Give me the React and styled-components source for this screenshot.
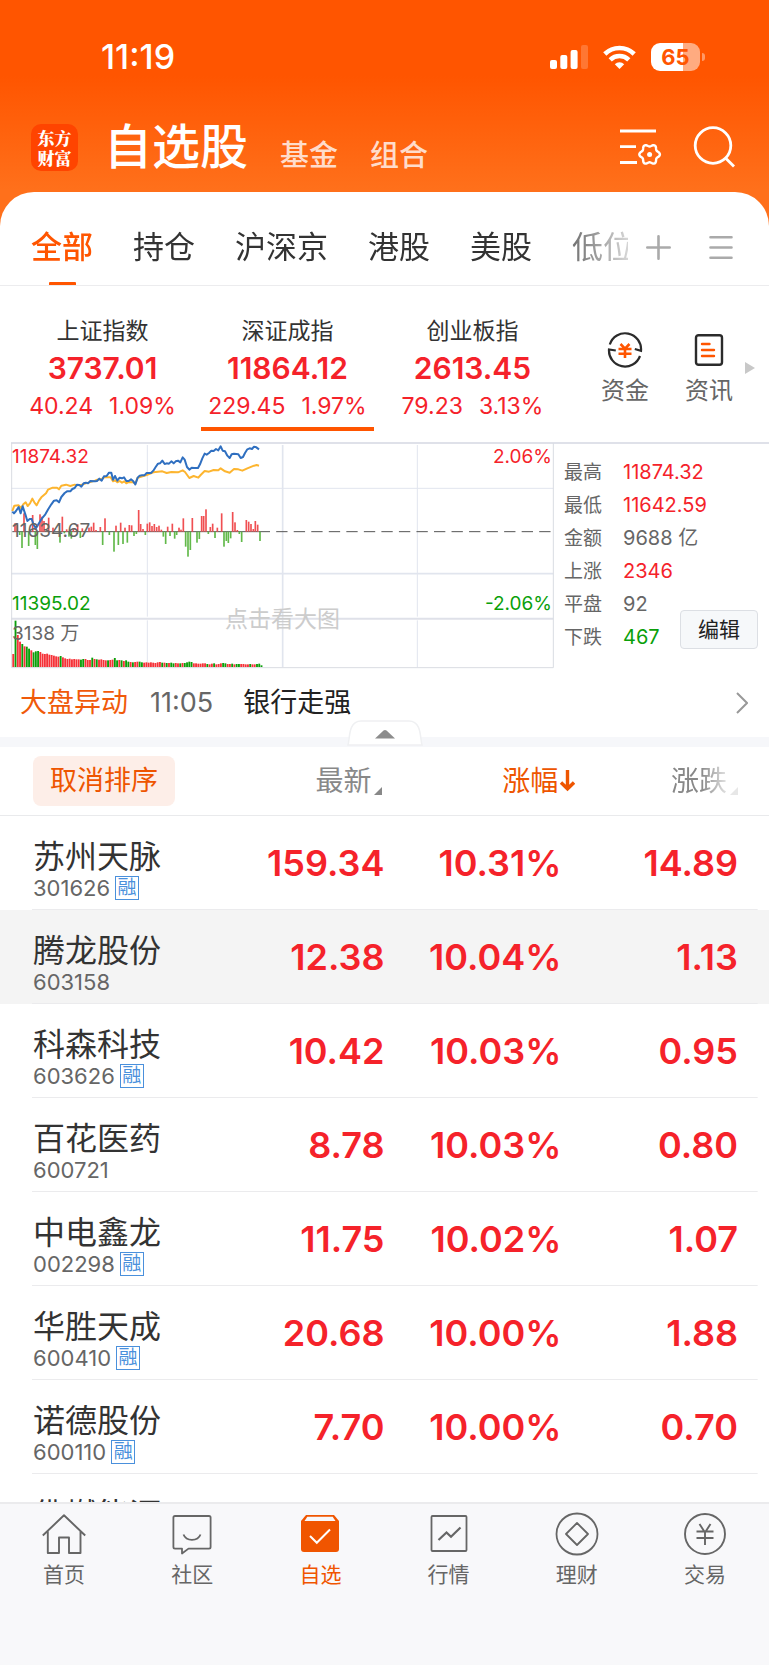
import React from 'react'
import styled, { createGlobalStyle, css } from 'styled-components'

const RED = '#f5222a'
const GREEN = '#0a9f0a'
const ORANGE = '#ff5500'

const GlobalStyle = createGlobalStyle`
  * { box-sizing: border-box; }
  body {
    margin: 0;
    font-family: Inter, "Noto Sans CJK SC", sans-serif;
    color: #333;
  }
  button {
    margin: 0;
    padding: 0;
    border: 0;
    background: none;
    font: inherit;
    color: inherit;
    cursor: pointer;
  }
  a { color: inherit; text-decoration: none; }
  svg { display: block; flex-shrink: 0; }
`

/* ---------- data ---------- */

const groups = ['全部', '持仓', '沪深京', '港股', '美股', '低位']

const indexes = [
  { name: '上证指数', value: '3737.01', change: '40.24', pct: '1.09%' },
  { name: '深证成指', value: '11864.12', change: '229.45', pct: '1.97%', active: true },
  { name: '创业板指', value: '2613.45', change: '79.23', pct: '3.13%' },
]

const summary = [
  { label: '最高', value: '11874.32', color: RED },
  { label: '最低', value: '11642.59', color: RED },
  { label: '金额', value: '9688 亿' },
  { label: '上涨', value: '2346', color: RED },
  { label: '平盘', value: '92' },
  { label: '下跌', value: '467', color: GREEN },
]

const stocks = [
  { name: '苏州天脉', code: '301626', margin: true, price: '159.34', pct: '10.31%', diff: '14.89' },
  { name: '腾龙股份', code: '603158', price: '12.38', pct: '10.04%', diff: '1.13', pressed: true },
  { name: '科森科技', code: '603626', margin: true, price: '10.42', pct: '10.03%', diff: '0.95' },
  { name: '百花医药', code: '600721', price: '8.78', pct: '10.03%', diff: '0.80' },
  { name: '中电鑫龙', code: '002298', margin: true, price: '11.75', pct: '10.02%', diff: '1.07' },
  { name: '华胜天成', code: '600410', margin: true, price: '20.68', pct: '10.00%', diff: '1.88' },
  { name: '诺德股份', code: '600110', margin: true, price: '7.70', pct: '10.00%', diff: '0.70' },
  { name: '佛燃能源' },
]

// [x, end of bar], the bars start on the zero line
const upBars = [
  [45, 265], [52, 268], [72, 235], [98, 240], [120, 238], [126, 245], [132, 258], [146, 248],
  [159, 278], [187, 245], [200, 283], [220, 280], [233, 268], [247, 280], [267, 278], [274, 275],
  [281, 263], [288, 285], [301, 276], [315, 250], [348, 272], [362, 263], [375, 278], [388, 270],
  [395, 271], [416, 225], [422, 267], [429, 282], [442, 266], [449, 262], [456, 273], [463, 267],
  [470, 276], [477, 272], [484, 284], [503, 275], [517, 266], [537, 278], [543, 284], [550, 250],
  [577, 249], [605, 243], [611, 243], [618, 223], [631, 276], [638, 266], [652, 278], [665, 235],
  [698, 231], [705, 262], [712, 285], [739, 255], [746, 260], [753, 267], [760, 282], [766, 258],
  [773, 269],
]
const downBars = [
  [59, 300], [66, 339], [86, 333], [106, 330], [112, 342], [180, 323], [193, 295], [207, 305],
  [214, 311], [241, 309], [308, 330], [328, 300], [342, 350], [355, 330], [369, 327], [382, 323],
  [402, 303], [409, 297], [436, 300], [490, 305], [497, 327], [510, 303], [524, 311], [530, 300],
  [557, 335], [564, 365], [571, 345], [591, 323], [598, 312], [625, 297], [645, 309], [672, 335],
  [679, 318], [685, 324], [692, 310], [718, 297], [725, 321], [780, 318],
]

const volumes = [
  39, 139, 96, 76, 69, 62, 61, 55, 50, 44, 47, 48, 45, 40, 39, 40, 37, 36, 34, 32, 31, 33,
  29, 26, 24, 25, 23, 24, 23, 23, 22, 24, 24, 21, 21, 28, 24, 23, 22, 23, 21, 20, 20, 21,
  22, 27, 20, 21, 20, 18, 20, 16, 15, 14, 15, 16, 16, 14, 13, 14, 13, 14, 13, 12, 14, 15,
  13, 13, 12, 12, 13, 11, 12, 11, 11, 12, 12, 14, 16, 15, 11, 11, 10, 10, 11, 11, 9, 8,
  10, 11, 8, 9, 11, 12, 11, 9, 9, 10, 8, 9, 9, 9, 9, 8, 8, 9, 8, 8, 9, 10, 5,
]
const volumeColors =
  'rgrrgrggrgggrrrrrrrrrgrrrrrrrrggrrrgrgrrrrgrrggrgrggrgrrggrrrrrrrrgrgrggrrgrggggrrrrrrgrrgrrrggrrgrggrrrrgrrggg'

const priceLine =
  '37,230 42,235 48,228 56,216 62,235 68,214 76,238 82,258 89,252 95,252 101,270 108,280 116,266 126,250 136,238 145,222 154,208 162,197 170,196 177,202 184,186 194,174 201,169 211,169 217,162 224,159 231,149 238,150 244,155 251,145 258,143 264,145 271,138 285,139 291,138 298,131 305,137 312,124 320,123 327,113 334,113 339,134 345,123 352,137 359,128 366,130 372,127 379,138 386,138 393,133 400,139 406,148 413,128 419,122 426,121 433,121 440,114 453,114 460,107 467,96 474,86 480,85 487,77 494,87 500,85 507,86 514,79 521,85 527,79 534,77 541,82 548,67 554,74 561,96 568,104 575,98 582,99 594,99 600,88 607,70 614,56 620,59 627,54 634,47 641,48 648,42 655,46 662,34 668,47 675,49 682,62 689,69 695,58 702,56 715,58 722,69 729,66 735,54 742,43 749,40 756,42 762,35 769,37 777,43'
const averageLine =
  '37,228 43,212 56,211 63,219 70,208 77,202 83,213 90,205 97,191 103,202 110,211 117,197 124,187 131,181 138,175 144,164 158,158 171,158 177,163 184,152 198,149 211,153 224,149 231,151 245,149 265,143 285,137 292,134 305,132 312,127 332,127 339,139 345,136 352,142 359,138 366,143 373,139 379,145 386,141 400,142 406,146 413,128 430,123 440,120 460,112 474,110 487,109 500,114 514,111 534,112 548,106 555,111 568,129 581,123 595,128 602,120 614,108 627,110 641,105 655,106 662,100 675,109 689,113 702,102 715,103 727,107 742,100 762,92 770,90 777,92'

/* ---------- layout ---------- */

const Page = styled.div`
  display: flex;
  flex-direction: column;
  height: 100vh;
  background: linear-gradient(${ORANGE} 76px, #ff701b 190px);
`

const StatusBar = styled.div`
  display: flex;
  align-items: center;
  gap: 15px;
  padding: 38px 64px 0 101px;
  line-height: 38px;
  color: #fff;
`

const Clock = styled.time`
  flex: 1;
  font-size: 34px;
  font-weight: 500;
`

const Battery = styled.div`
  position: relative;
  width: 49px;
  height: 28px;
  margin-right: 5px;
  border-radius: 9px;
  background: linear-gradient(to right, #fff 66%, #ffab80 66%);
  color: ${ORANGE};
  font-size: 22px;
  font-weight: 700;
  line-height: 28px;
  text-align: center;

  &::after {
    content: '';
    position: absolute;
    right: -5px;
    top: 10px;
    width: 3px;
    height: 8px;
    border-radius: 0 3px 3px 0;
    background: #ff9966;
  }
`

const TitleBar = styled.header`
  display: flex;
  align-items: center;
  padding: 42px 33px 16px 31px;
  color: #fff;
`

const Logo = styled.div`
  width: 47px;
  height: 47px;
  padding-top: 4px;
  border-radius: 10px;
  background: #ff4400;
  font-family: "Noto Serif CJK SC", "Noto Sans CJK SC", serif;
  font-size: 17px;
  font-weight: 900;
  line-height: 20px;
  text-align: center;
`

const TitleTabs = styled.nav`
  display: flex;
  flex: 1;
  align-items: flex-end;
  gap: 32px;
  margin-left: 26px;
`

const TitleTab = styled.button`
  font-size: ${(p) => (p.$active ? 48 : 29)}px;
  font-weight: 500;
  line-height: ${(p) => (p.$active ? 58 : 40)}px;
  color: ${(p) => (p.$active ? '#fff' : '#ffdccb')};
`

const TitleTools = styled.div`
  display: flex;
  gap: 31px;
`

const Sheet = styled.main`
  display: flex;
  flex: 1;
  flex-direction: column;
  min-height: 0;
  border-radius: 34px 34px 0 0;
  background: #fff;
`

const GroupBar = styled.div`
  display: flex;
  border-bottom: 1px solid #ececee;
`

const GroupTabs = styled.nav`
  display: flex;
  flex: 1;
  gap: 40px;
  min-width: 0;
  overflow: hidden;
  padding-left: 31px;
  mask-image: linear-gradient(to right, #000 calc(100% - 90px), rgba(0, 0, 0, 0.2));
`

const GroupTab = styled.button`
  position: relative;
  flex-shrink: 0;
  height: 94px;
  margin-bottom: -1px;
  padding-top: 16px;
  font-size: 31px;
  line-height: 40px;

  ${(p) =>
    p.$active &&
    css`
      color: ${ORANGE};
      font-weight: 500;

      &::after {
        content: '';
        position: absolute;
        left: calc(50% - 13px);
        bottom: 0;
        width: 27px;
        height: 4px;
        border-radius: 1px;
        background: ${ORANGE};
      }
    `}
`

const GroupTools = styled.div`
  display: flex;
  align-items: center;
  gap: 38px;
  padding: 17px 36px 0 18px;
`

const IndexBar = styled.section`
  display: flex;
  padding: 0 14px 11px 10px;
`

const IndexButton = styled.button`
  display: flex;
  flex: 173;
  flex-direction: column;
  align-items: center;
  margin: 0 6px;
  padding-top: 31px;
  padding-bottom: 7px;
  border-bottom: 4px solid ${(p) => (p.$active ? ORANGE : 'transparent')};
  color: ${RED};
  white-space: nowrap;
`

const IndexName = styled.span`
  color: #333;
  font-size: 23px;
  line-height: 28px;
`

const IndexValue = styled.span`
  margin: 5px 0 6px;
  font-size: 30px;
  font-weight: 600;
  line-height: 36px;
`

const IndexChange = styled.span`
  display: flex;
  gap: 16px;
  font-size: 23px;
  line-height: 28px;
`

const Shortcuts = styled.div`
  display: flex;
  flex: 190;
  align-items: center;
  justify-content: flex-end;
  padding-top: 19px;
`

const Shortcut = styled.a`
  display: flex;
  flex-direction: column;
  align-items: center;
  gap: 9px;
  margin-right: 36px;
  color: #666;
  font-size: 24px;
  line-height: 28px;

  & + & { margin-right: 12px; }
`

const Market = styled.section`
  display: flex;
  margin-left: 11px;
`

const ChartBox = styled.a`
  position: relative;
  flex: 543;
  font-size: 19px;
  line-height: 20px;

  svg { width: 100%; height: auto; }
`

const ChartLabel = styled.span`
  position: absolute;
  top: ${(p) => p.$top}%;
  ${(p) => (p.$right ? 'right: 2px' : 'left: 1px')};
  color: ${(p) => p.$color || '#666'};
`

const ChartHint = styled.span`
  position: absolute;
  top: 72%;
  left: 0;
  width: 100%;
  color: #ccc;
  font-size: 23px;
  line-height: 28px;
  text-align: center;
`

const Summary = styled.div`
  position: relative;
  flex: 215;
  border-top: 2px solid #dfe1e9;
`

const SummaryList = styled.dl`
  display: grid;
  grid-template-columns: 59px 1fr;
  margin: 12px 0 0 10px;
  font-size: 19px;
  line-height: 33px;
  color: #666;
`

const SummaryValue = styled.dd`
  margin: 0;
  color: ${(p) => p.$color || '#666'};
  font-size: 20px;
`

const EditButton = styled.button`
  position: absolute;
  right: 11px;
  bottom: 20px;
  padding: 0 17px;
  border: 1px solid #dcdfe4;
  border-radius: 4px;
  background: #f6f8fa;
  color: #222;
  font-size: 21px;
  line-height: 37px;
`

const NewsBar = styled.a`
  display: flex;
  align-items: center;
  padding: 0 21px 0 20px;
  border-bottom: 10px solid #f6f7fa;
  color: #222;
  font-size: 27px;
  line-height: 68px;
`

const NewsTag = styled.span`
  color: #f05a0a;
`

const NewsTime = styled.time`
  margin: 0 30px 0 22px;
  color: #666;
`

const NewsTitle = styled.span`
  flex: 1;
`

const FoldWrap = styled.div`
  position: relative;
`

const FoldButton = styled.button`
  position: absolute;
  left: calc(50% - 38px);
  bottom: 1px;
`

const ListBox = styled.section`
  flex: 1;
  min-height: 0;
  overflow: hidden;
`

const StockTable = styled.table`
  width: 100%;
  border-collapse: collapse;
  table-layout: fixed;
`

const Col = styled.col`
  width: ${(p) => p.$width}%;
`

const HeadCell = styled.th`
  height: 68px;
  padding: 0 2px 0 0;
  border-bottom: 1px solid #e9eaec;
  font-weight: 400;
  text-align: right;

  &:first-child { padding-left: 33px; text-align: left; }
  &:last-child { padding-right: 31px; }
`

const ResetButton = styled.button`
  padding: 0 17px;
  border-radius: 8px;
  background: #fdeee8;
  color: #ee5500;
  font-size: 27px;
  line-height: 50px;
  white-space: nowrap;
`

const SortButton = styled.button`
  display: inline-flex;
  align-items: center;
  color: ${(p) => (p.$active ? '#ee5500' : '#888')};
  font-size: 28px;
  line-height: 40px;
  margin-right: ${(p) => (p.$active ? -16 : 0)}px;
  ${(p) => p.$fade && 'mask-image: linear-gradient(to right, #000 45%, rgba(0, 0, 0, 0.2) 85%);'}
`

const StockRow = styled.tr`
  background: linear-gradient(#ebebed, #ebebed) 32px 100% / calc(100% - 43px) 1px no-repeat
    ${(p) => (p.$pressed ? '#f4f4f4' : '#fff')};
`

const NameCell = styled.td`
  padding: 23px 0 10px 33px;
`

const StockName = styled.div`
  font-size: 32px;
  line-height: 36px;
  white-space: nowrap;
`

const StockCode = styled.div`
  display: flex;
  align-items: center;
  gap: 5px;
  height: 24px;
  margin-top: 1px;
  color: #666;
  font-size: 22px;
  line-height: 24px;
`

const MarginBadge = styled.span`
  width: 24px;
  height: 24px;
  border: 1px solid #4a90dc;
  color: #4a90dc;
  font-size: 19px;
  line-height: 22px;
  text-align: center;
`

const NumberCell = styled.td`
  padding: 0;
  color: ${RED};
  font-size: 36px;
  font-weight: 600;
  text-align: right;

  &:last-child { padding-right: 31px; }
`

const BottomNav = styled.nav`
  display: flex;
  flex-shrink: 0;
  padding-bottom: 76px;
  border-top: 2px solid #ebebed;
  background: #f8f8fa;
`

const NavItem = styled.a`
  display: flex;
  flex: 1;
  flex-direction: column;
  align-items: center;
  padding-top: 8px;
  color: ${(p) => (p.$active ? '#f05500' : '#666')};
  font-size: 21px;
  line-height: 28px;

  svg { margin-bottom: 5px; }
`

/* ---------- icons ---------- */

const SignalIcon = () => (
  <svg width="38" height="24" viewBox="0 0 38 24" fill="#fff">
    <rect x="0" y="15" width="7" height="9" rx="2" />
    <rect x="10.300" y="10" width="7" height="14" rx="2" />
    <rect x="20.600" y="5" width="7" height="19" rx="2" />
    <rect x="31" y="0" width="7" height="24" rx="2" opacity=".2" />
  </svg>
)

const WifiIcon = () => (
  <svg width="33" height="24" viewBox="0 0 33 24" fill="none" stroke="#fff" strokeWidth="4.600">
    <path d="M1.800 9a21 21 0 0 1 29.400 0" />
    <path d="M7.200 14.800a13.400 13.400 0 0 1 18.600 0" />
    <path d="M16.500 24l-4.700-4.800a6.800 6.800 0 0 1 9.400 0z" fill="#fff" stroke="none" />
  </svg>
)

// six soft teeth round the centre
const gearPoints = Array.from({ length: 72 }, (_, i) => {
  const a = (i * Math.PI) / 36
  const r = 9.1 + 1.2 * Math.cos(6 * a)
  return `${(29.6 + r * Math.cos(a)).toFixed(2)},${(28.4 + r * Math.sin(a)).toFixed(2)}`
}).join(' ')

const ListSettingIcon = () => (
  <svg width="42" height="42" viewBox="0 0 42 42" fill="none" stroke="#fff" strokeWidth="2.800">
    <path d="M0 5h36M0 20.700h16M0 36.500h17" />
    <polygon points={gearPoints} strokeWidth="2.400" />
    <circle cx="29.600" cy="28.400" r="2.500" fill="#fff" stroke="none" />
  </svg>
)

const SearchIcon = () => (
  <svg width="43" height="42" viewBox="0 0 43 42" fill="none" stroke="#fff" strokeWidth="2.800">
    <circle cx="20" cy="19.500" r="17.800" />
    <path d="M32.500 32l8.500 8.500" />
  </svg>
)

const PlusIcon = () => (
  <svg width="25" height="25" viewBox="0 0 25 25" stroke="#aaa" strokeWidth="2.600" strokeLinecap="round">
    <path d="M12.500 1.300v22.400M1.300 12.500h22.400" />
  </svg>
)

const MenuIcon = () => (
  <svg width="24" height="25" viewBox="0 0 24 25" stroke="#aaa" strokeWidth="2.600" strokeLinecap="round">
    <path d="M1.500 2.300h21M1.500 12.500h21M1.500 22.700h21" />
  </svg>
)

const FundsIcon = () => (
  <svg width="36" height="36" viewBox="0 0 36 36" fill="none" strokeWidth="2.200">
    <path
      d="M2.800 12.500A16 16 0 0 1 34 18.800L27.800 17M33 24A16 16 0 0 1 2 17.500l6.800 1"
      stroke="#2b2b2b"
    />
    <path
      d="M13.500 12l4.500 4.600L22.500 12M11.500 17h13M11.500 21.800h13M18 16.500v9.500"
      stroke={ORANGE}
      strokeWidth="2.600"
    />
  </svg>
)

const NewsIcon = () => (
  <svg width="30" height="36" viewBox="0 0 30 36" fill="none" strokeWidth="2.400">
    <rect x="2" y="3.200" width="26" height="29.600" rx="2.500" stroke="#2b2b2b" />
    <path d="M8 12h7.500M8 18h12M8 24h12" stroke={ORANGE} strokeLinecap="round" />
  </svg>
)

const MoreArrow = () => (
  <svg width="10" height="12" viewBox="0 0 10 12" fill="#c8c8c8">
    <path d="M0 0l10 6-10 6z" />
  </svg>
)

const ChevronIcon = () => (
  <svg width="12" height="22" viewBox="0 0 12 22" fill="none" stroke="#999" strokeWidth="2">
    <path d="M1 1l10 10L1 21" />
  </svg>
)

const FoldIcon = () => (
  <svg width="76" height="26" viewBox="0 0 76 26">
    <path d="M1 25c2-6 0-24 13-24h48c13 0 11 18 13 24z" fill="#fff" stroke="#eff0f2" strokeWidth="1.500" />
    <path d="M28 18.500l8.500-8q1.500-1.200 3 0l8.500 8z" fill="#8c8c8c" />
  </svg>
)

const SortMark = styled.span`
  align-self: flex-end;
  margin: 0 0 6px 3px;
  border-bottom: 8px solid #888;
  border-left: 8px solid transparent;
`

const DownArrow = () => (
  <svg width="17" height="22" viewBox="0 0 17 22" fill="none" stroke="#ee5500" strokeWidth="3.400">
    <path d="M9.500 0v19M3 12.500l6.500 6.300 6.500-6.300" />
  </svg>
)

const HomeIcon = () => (
  <svg width="44" height="44" viewBox="0 0 44 44" fill="none" stroke="#666" strokeWidth="1.900">
    <path d="M.8 23.500L22 3.300l21.200 20.200M5.800 19.500V41h11.200V25.500h10V41h11.500V19.500" strokeLinejoin="round" />
  </svg>
)

const CommunityIcon = () => (
  <svg width="40" height="44" viewBox="0 0 40 44" fill="none" stroke="#666" strokeWidth="1.800" strokeLinejoin="round">
    <path d="M3 4h34q1.600 0 1.600 1.600V35q0 1.600-1.600 1.600H16.500L10 41.500v-4.900H3q-1.600 0-1.600-1.600V5.600Q1.400 4 3 4z" />
    <path d="M11.500 22.500q2 5.300 8.500 5.300t8.500-5.300" />
  </svg>
)

const WatchlistIcon = () => (
  <svg width="38" height="44" viewBox="0 0 38 44">
    <path d="M5 3h28l5 6v28q0 3-3 3H3q-3 0-3-3V9z" fill="#f05500" />
    <path d="M6.300 4.800h25.400L34.500 9H3.500z" fill="#f8f8fa" />
    <path d="M9 24l6.800 6.800L29 17.500" fill="none" stroke="#fff" strokeWidth="2" />
  </svg>
)

const QuotesIcon = () => (
  <svg width="38" height="44" viewBox="0 0 38 44" fill="none" stroke="#666" strokeWidth="1.800">
    <rect x="1.500" y="4" width="35" height="35" rx="1" />
    <path d="M8.500 28l8-7.500 4.500 4.300 9.500-9.300" strokeWidth="2.200" />
  </svg>
)

const WealthIcon = () => (
  <svg width="44" height="44" viewBox="0 0 44 44" fill="none" stroke="#666" strokeWidth="1.800">
    <circle cx="22" cy="22" r="20.500" />
    <path d="M22 11l11 11-11 11-11-11z" strokeLinejoin="round" />
  </svg>
)

const TradeIcon = () => (
  <svg width="44" height="44" viewBox="0 0 44 44" fill="none" stroke="#666" strokeWidth="1.900">
    <circle cx="22" cy="22" r="20" />
    <path d="M16.500 12l5.500 8.500 5.500-8.500M13.500 19.500h17M13.500 26h17M22 19.500V33" />
  </svg>
)

const navItems = [
  { label: '首页', Icon: HomeIcon },
  { label: '社区', Icon: CommunityIcon },
  { label: '自选', Icon: WatchlistIcon, active: true },
  { label: '行情', Icon: QuotesIcon },
  { label: '理财', Icon: WealthIcon },
  { label: '交易', Icon: TradeIcon },
]

/* ---------- chart ---------- */

const STEP = 6.77
const ZERO = 290
const BASE = 696

// three units to a pixel, one bar per minute
const MinuteChart = () => (
  <svg viewBox="33 21 1629 681" fill="none">
    <g stroke="#e1e5ee" strokeWidth="3">
      <path d="M33 160H1660M442 30V545M442 556V697M1252 30V545M1252 556V697" />
      <path d="M33 416H1660M848 30V697" strokeWidth="5" />
    </g>
    <path d="M33 551H1660" stroke="#dfe1e9" strokeWidth="6" />
    <path d="M33 24H1662" stroke="#dfe1e9" strokeWidth="6" />
    <path d="M35 24V698H1660V24" stroke="#d9dce2" strokeWidth="3" />
    <path d="M37 290H776" stroke="#555" strokeWidth="3" />
    <path d="M776 290H1658" stroke="#555" strokeWidth="3" strokeDasharray="34 18.600" />
    {upBars.map(([x, y]) => (
      <rect key={x} x={x - 2.5} y={y} width="5" height={ZERO - y} fill="#f04f52" />
    ))}
    {downBars.map(([x, y]) => (
      <rect key={x} x={x - 2.5} y={ZERO} width="5" height={y - ZERO} fill="#62b94a" />
    ))}
    {volumes.map((h, i) => (
      <rect
        key={i}
        x={37 + i * STEP}
        y={BASE - h}
        width="5.600"
        height={h}
        fill={volumeColors[i] === 'g' ? '#0a9f0a' : '#f53238'}
      />
    ))}
    <polyline points={averageLine} stroke="#fdb52f" strokeWidth="6" strokeLinejoin="round" />
    <polyline points={priceLine} stroke="#2f6fc0" strokeWidth="6" strokeLinejoin="round" />
  </svg>
)

const App = () => {
  return (
    <Page>
      <GlobalStyle />
      <StatusBar>
        <Clock>11:19</Clock>
        <SignalIcon />
        <WifiIcon />
        <Battery>65</Battery>
      </StatusBar>

      <TitleBar>
        <Logo>东方<br />财富</Logo>
        <TitleTabs>
          <TitleTab $active>自选股</TitleTab>
          <TitleTab>基金</TitleTab>
          <TitleTab>组合</TitleTab>
        </TitleTabs>
        <TitleTools>
          <button aria-label="列表设置"><ListSettingIcon /></button>
          <button aria-label="搜索"><SearchIcon /></button>
        </TitleTools>
      </TitleBar>

      <Sheet>
        <GroupBar>
          <GroupTabs>
            {groups.map((g, i) => (
              <GroupTab key={g} $active={i === 0}>{g}</GroupTab>
            ))}
          </GroupTabs>
          <GroupTools>
            <button aria-label="添加分组"><PlusIcon /></button>
            <button aria-label="分组管理"><MenuIcon /></button>
          </GroupTools>
        </GroupBar>

        <IndexBar>
          {indexes.map((el) => (
            <IndexButton key={el.name} $active={el.active}>
              <IndexName>{el.name}</IndexName>
              <IndexValue>{el.value}</IndexValue>
              <IndexChange>
                <span>{el.change}</span>
                <span>{el.pct}</span>
              </IndexChange>
            </IndexButton>
          ))}
          <Shortcuts>
            <Shortcut href="#funds"><FundsIcon />资金</Shortcut>
            <Shortcut href="#news"><NewsIcon />资讯</Shortcut>
            <MoreArrow />
          </Shortcuts>
        </IndexBar>

        <Market>
          <ChartBox href="#chart">
            <MinuteChart />
            <ChartHint>点击看大图</ChartHint>
            <ChartLabel $top={2} $color={RED}>11874.32</ChartLabel>
            <ChartLabel $top={35}>11634.67</ChartLabel>
            <ChartLabel $top={67} $color={GREEN}>11395.02</ChartLabel>
            <ChartLabel $top={80}>3138 万</ChartLabel>
            <ChartLabel $top={2} $right $color={RED}>2.06%</ChartLabel>
            <ChartLabel $top={67} $right $color={GREEN}>-2.06%</ChartLabel>
          </ChartBox>
          <Summary>
            <SummaryList>
              {summary.map((el) => (
                <React.Fragment key={el.label}>
                  <dt>{el.label}</dt>
                  <SummaryValue $color={el.color}>{el.value}</SummaryValue>
                </React.Fragment>
              ))}
            </SummaryList>
            <EditButton>编辑</EditButton>
          </Summary>
        </Market>

        <NewsBar href="#move">
          <NewsTag>大盘异动</NewsTag>
          <NewsTime>11:05</NewsTime>
          <NewsTitle>银行走强</NewsTitle>
          <ChevronIcon />
        </NewsBar>
        <FoldWrap>
          <FoldButton aria-label="收起"><FoldIcon /></FoldButton>
        </FoldWrap>

        <ListBox>
          <StockTable>
            <colgroup>
              <Col $width={24} />
              <Col $width={26} />
              <Col $width={23} />
              <Col $width={27} />
            </colgroup>
            <thead>
              <tr>
                <HeadCell><ResetButton>取消排序</ResetButton></HeadCell>
                <HeadCell>
                  <SortButton>最新<SortMark /></SortButton>
                </HeadCell>
                <HeadCell>
                  <SortButton $active>涨幅<DownArrow /></SortButton>
                </HeadCell>
                <HeadCell>
                  <SortButton $fade>涨跌<SortMark /></SortButton>
                </HeadCell>
              </tr>
            </thead>
            <tbody>
              {stocks.map((el) => (
                <StockRow key={el.name} $pressed={el.pressed}>
                  <NameCell>
                    <StockName>{el.name}</StockName>
                    <StockCode>
                      {el.code}
                      {el.margin && <MarginBadge>融</MarginBadge>}
                    </StockCode>
                  </NameCell>
                  <NumberCell>{el.price}</NumberCell>
                  <NumberCell>{el.pct}</NumberCell>
                  <NumberCell>{el.diff}</NumberCell>
                </StockRow>
              ))}
            </tbody>
          </StockTable>
        </ListBox>
      </Sheet>

      <BottomNav>
        {navItems.map(({ label, Icon, active }) => (
          <NavItem key={label} href={'#' + label} $active={active}>
            <Icon />
            {label}
          </NavItem>
        ))}
      </BottomNav>
    </Page>
  )
}

export default App
